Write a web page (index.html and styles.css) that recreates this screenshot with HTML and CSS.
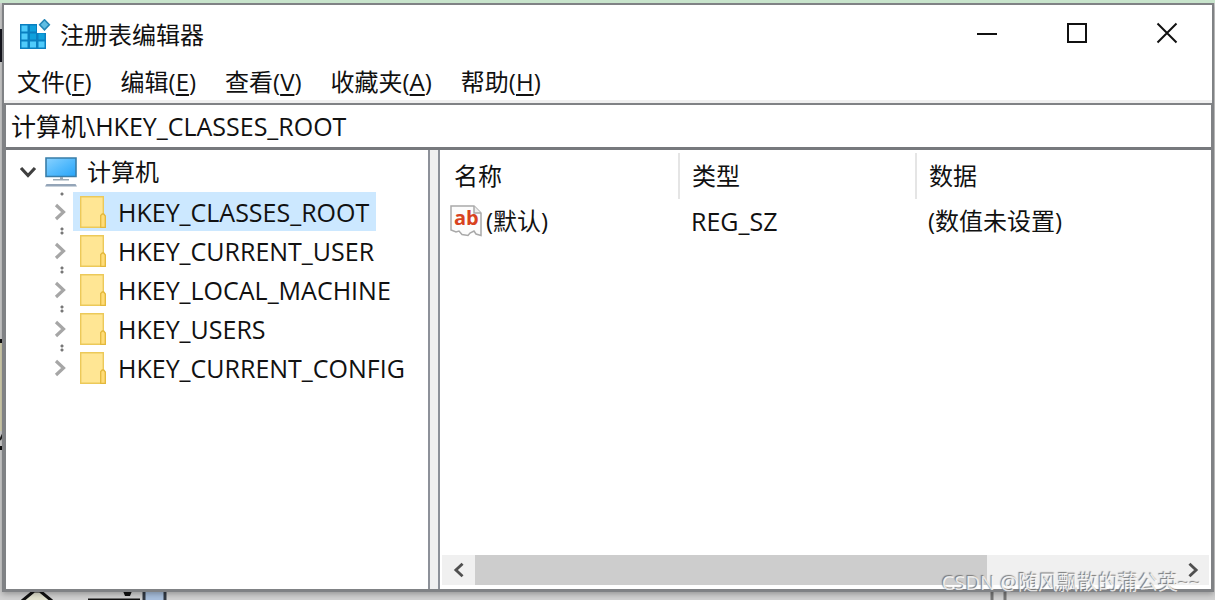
FILE: index.html
```
<!DOCTYPE html>
<html lang="zh-CN">
<head>
  <meta charset="UTF-8">
  <title>注册表编辑器</title>
  <link rel="stylesheet" href="styles.css">
</head>
<body>
  <svg class="symbols" width="0" height="0" aria-hidden="true">
    <symbol id="chevron" viewBox="0 0 12 18">
      <path d="M2 2l7.500 7-7.500 7" fill="none" stroke="currentColor" stroke-width="3.200"/>
    </symbol>
    <symbol id="folder" viewBox="0 0 26 32">
      <path d="M.7.7h22.600v17.500l2 2.500v10.600H.7z" fill="#ffe694" stroke="#ecc95a" stroke-width="1.400"/>
      <path d="M20.700 31.300V19.500l1.500-1.500h1.500l1.600 2v11.300z" fill="#ffdc78" stroke="#e3b83c" stroke-width="1.300"/>
    </symbol>
  </svg>

  <!-- 桌面背景 -->
  <svg class="desk desk-left" width="4" height="590" aria-hidden="true">
    <path d="M0 26h3v33H0z" fill="#15151f"/>
    <path d="M0 336h4v4H0zM0 443h4v4H0z" fill="#111"/>
    <path d="M0 437l4-8" stroke="#222" stroke-width="2"/>
    <path d="M0 340h3v88H0z" fill="#d9d5b4"/>
  </svg>
  <svg class="desk desk-bottom" width="200" height="9" aria-hidden="true">
    <path d="M22 10L34 0h6l12 10" fill="#e4e4d0" stroke="#111" stroke-width="3"/>
    <path d="M88 8.500h52" stroke="#111" stroke-width="2"/>
    <path d="M123 0h9l-2 5h-5z" fill="#111"/>
    <path d="M145 0h20v9h-20z" fill="#a9c0de"/>
    <path d="M144 0v9M165 0v9" stroke="#333a44" stroke-width="3"/>
  </svg>
  <svg class="desk desk-right" width="20" height="9" aria-hidden="true">
    <path d="M2 0v9M15 0v9" stroke="#777" stroke-width="3"/>
  </svg>

  <div class="window">
    <div class="titlebar">
      <svg class="app-icon" viewBox="0 0 32 32" aria-hidden="true">
        <path d="M1 5h17v9h9v16H1z" fill="#0a7fc0"/>
        <path d="M2.500 6.500h6v6h-6zM2.500 14.500h6v6h-6zM2.500 22.500h6v6h-6zM11 22.500h6v6h-6zM19.500 22.500h6v6h-6z" fill="#4fcbfb"/>
        <path d="M11 6.500h6v6h-6zM11 14.500h6v6h-6zM19.500 14.500h6v6h-6z" fill="#0fa0dc"/>
        <path d="M25.500.8l4.800 5-4.800 5-4.800-5z" fill="#5fbde3" stroke="#2385b5" stroke-width="1.600"/>
      </svg>
      <h1>注册表编辑器</h1>
      <div class="win-btns">
        <button aria-label="最小化"><svg viewBox="0 0 22 22"><path d="M1 12h20"/></svg></button>
        <button aria-label="最大化"><svg viewBox="0 0 22 22"><path d="M2 2h18v18H2z"/></svg></button>
        <button aria-label="关闭"><svg viewBox="0 0 22 22"><path d="M1.500 1.500l19 19M20.500 1.500l-19 19"/></svg></button>
      </div>
    </div>

    <div class="menubar">
      <button>文件(<u>F</u>)</button>
      <button>编辑(<u>E</u>)</button>
      <button>查看(<u>V</u>)</button>
      <button>收藏夹(<u>A</u>)</button>
      <button>帮助(<u>H</u>)</button>
    </div>

    <div class="client">
      <input class="address" type="text" aria-label="地址" value="计算机\HKEY_CLASSES_ROOT">

      <div class="panes">
        <div class="tree">
          <div class="root">
            <button class="arrow open" aria-label="折叠"><svg><use href="#chevron"/></svg></button>
            <svg class="pc" viewBox="0 0 32 30" aria-hidden="true">
              <defs>
                <linearGradient id="screen" x1="0" y1="0" x2="1" y2="1">
                  <stop offset="0" stop-color="#8ad2ff"/>
                  <stop offset=".5" stop-color="#55bbfd"/>
                  <stop offset="1" stop-color="#27a4f8"/>
                </linearGradient>
              </defs>
              <path d="M1 1h30v18.500H1z" fill="url(#screen)" stroke="#397da8" stroke-width="1.600"/>
              <path d="M15 20h3v2h6v1.500H8V22h7z" fill="#9aa9b5"/>
              <path d="M1.500 27h29l1.500 2.500H0z" fill="#94a5b8"/>
            </svg>
            <span>计算机</span>
          </div>
          <ul>
            <li>
              <button class="arrow" aria-label="展开"><svg><use href="#chevron"/></svg></button>
              <span class="key selected"><svg><use href="#folder"/></svg>HKEY_CLASSES_ROOT</span>
            </li>
            <li>
              <button class="arrow" aria-label="展开"><svg><use href="#chevron"/></svg></button>
              <span class="key"><svg><use href="#folder"/></svg>HKEY_CURRENT_USER</span>
            </li>
            <li>
              <button class="arrow" aria-label="展开"><svg><use href="#chevron"/></svg></button>
              <span class="key"><svg><use href="#folder"/></svg>HKEY_LOCAL_MACHINE</span>
            </li>
            <li>
              <button class="arrow" aria-label="展开"><svg><use href="#chevron"/></svg></button>
              <span class="key"><svg><use href="#folder"/></svg>HKEY_USERS</span>
            </li>
            <li>
              <button class="arrow" aria-label="展开"><svg><use href="#chevron"/></svg></button>
              <span class="key"><svg><use href="#folder"/></svg>HKEY_CURRENT_CONFIG</span>
            </li>
          </ul>
        </div>

        <div class="list">
          <table>
            <thead>
              <tr><th>名称</th><th>类型</th><th>数据</th></tr>
            </thead>
            <tbody>
              <tr>
                <td>
                  <div class="name">
                    <svg viewBox="0 0 32 32" aria-hidden="true">
                      <path d="M1 1h23l7 7v22.500l-5-1.500-2-3-4 2-2 2.500-6-1-3-3.500-3 1-5-2z" fill="#fcfcfc" stroke="#a9a9a9" stroke-width="1.500"/>
                      <path d="M24 1v7h7" fill="#eee" stroke="#a9a9a9" stroke-width="1.500"/>
                      <text x="4" y="20">ab</text>
                    </svg>
                    (默认)
                  </div>
                </td>
                <td class="type">REG_SZ</td>
                <td>(数值未设置)</td>
              </tr>
            </tbody>
          </table>
          <div class="scrollbar">
            <button class="left" aria-label="向左滚动"><svg><use href="#chevron"/></svg></button>
            <div class="track"><div class="thumb"></div></div>
            <button aria-label="向右滚动"><svg><use href="#chevron"/></svg></button>
          </div>
        </div>
      </div>
    </div>
  </div>

  <div class="watermark">CSDN @随风飘散的蒲公英~~</div>
</body>
</html>
```
FILE: styles.css
```
* {
  box-sizing: border-box;
}

body {
  margin: 0;
  height: 100vh;
  padding: 0 1px 8px 2px;
  display: flex;
  flex-direction: column;
  position: relative;
  overflow: hidden;
  background: #d2d2d2;
  border-top: 3px solid #c8e4cc;
  color: #111;
  font-family: "Open Sans", "Noto Sans CJK SC", sans-serif;
  font-size: 24px;
  line-height: 32px;
}

button {
  padding: 0;
  border: none;
  background: none;
  color: inherit;
  font: inherit;
}

svg {
  display: block;
  flex: none;
}

.symbols {
  position: absolute;
}

.desk {
  position: absolute;
}

.desk-left {
  left: 0;
  top: 0;
}

.desk-bottom {
  left: 0;
  bottom: 0;
}

.desk-right {
  right: 205px;
  bottom: 0;
}

.window {
  flex: 1;
  min-height: 0;
  display: flex;
  flex-direction: column;
  position: relative;
  background: #fff;
  border: 2px solid #808285;
  box-shadow: 0 2px 6px rgba(0, 0, 0, 0.3);
}

.titlebar {
  display: flex;
  align-items: center;
  height: 59px;
  padding-left: 15px;
}

.app-icon {
  width: 32px;
  height: 32px;
}

.titlebar h1 {
  margin: 0 0 0 9px;
  font-size: 24px;
  font-weight: normal;
}

.win-btns {
  display: flex;
  align-self: flex-start;
  margin-left: auto;
}

.win-btns button {
  width: 90px;
  height: 56px;
  display: flex;
  align-items: center;
  justify-content: center;
}

.win-btns svg {
  width: 22px;
  height: 22px;
  fill: none;
  stroke: #111;
  stroke-width: 2;
}

.menubar {
  display: flex;
  gap: 29px;
  height: 39px;
  padding-left: 13px;
  border-bottom: 3px solid #f0f0f0;
}

.menubar u {
  text-decoration-thickness: 2px;
  text-underline-offset: 3px;
}

.client {
  flex: 1;
  min-height: 0;
  display: flex;
  flex-direction: column;
  border: solid #808285;
  border-width: 2px 1px 1px 2px;
}

.address {
  height: 42px;
  padding: 0 5px 3px;
  border: none;
  outline: none;
  background: #fff;
  color: inherit;
  font: inherit;
  font-size: 25px;
}

.panes {
  flex: 1;
  min-height: 0;
  display: flex;
  gap: 8px;
  background: #f0f0f0;
  border-top: 3px solid #77797d;
}

.tree {
  flex: none;
  width: 424px;
  padding: 2px 0 0 13px;
  background: #fff;
  border-right: 2px solid #8d9199;
}

.root {
  display: flex;
  align-items: center;
  height: 40px;
}

.pc {
  width: 32px;
  height: 30px;
  margin: 0 10px 0 8px;
}

.arrow {
  width: 18px;
  height: 18px;
  display: flex;
  align-items: center;
  justify-content: center;
  color: #a6a6a6;
}

.arrow svg {
  width: 12px;
  height: 18px;
}

.arrow.open {
  color: #404040;
  transform: rotate(90deg);
}

.tree ul {
  margin: 0;
  padding: 0 0 0 32px;
  list-style: none;
}

.tree li {
  display: flex;
  align-items: center;
  height: 39px;
  /* 连接线的小点 */
  background: radial-gradient(circle, #777 1px, transparent 2px) 9px 0 / 4px 4px no-repeat,
    radial-gradient(circle, #777 1px, transparent 2px) 9px 35px / 4px 4px no-repeat;
}

.tree li:last-child {
  background-size: 4px 4px, 0 0;
}

.key {
  display: flex;
  align-items: center;
  gap: 12px;
  height: 39px;
  margin-left: 4px;
  padding: 0 7px;
  font-size: 25px;
}

.key svg {
  width: 26px;
  height: 32px;
}

.selected {
  background: #cce8ff;
}

.list {
  flex: 1;
  min-width: 0;
  display: flex;
  flex-direction: column;
  justify-content: space-between;
  padding: 3px 2px 4px;
  background: #fff;
  border-left: 2px solid #8d9199;
}

table {
  width: 100%;
  table-layout: fixed;
  border-collapse: collapse;
}

th,
td {
  padding: 0 0 0 12px;
  text-align: left;
  font-weight: normal;
}

th {
  width: 237px;
  height: 46px;
  border-right: 2px solid #e5e5e5;
}

th:last-child {
  width: auto;
  border-right: none;
}

td {
  height: 44px;
}

td:first-child {
  padding-left: 8px;
}

.type {
  font-size: 25px;
}

.name {
  display: flex;
  align-items: center;
  gap: 4px;
}

.name svg {
  width: 32px;
  height: 32px;
  overflow: visible;
}

.name text {
  fill: #d8431f;
  font-family: "Open Sans", sans-serif;
  font-size: 20px;
  font-weight: bold;
}

.scrollbar {
  display: flex;
  height: 30px;
  background: #f0f0f0;
}

.scrollbar button {
  width: 33px;
  display: flex;
  align-items: center;
  justify-content: center;
  color: #505050;
}

.scrollbar svg {
  width: 12px;
  height: 16px;
}

.left svg {
  transform: scaleX(-1);
}

.track {
  flex: 1;
}

.thumb {
  width: 73%;
  height: 100%;
  background: #cdcdcd;
}

.watermark {
  position: absolute;
  right: 14px;
  bottom: 3px;
  color: rgba(255, 255, 255, 0.8);
  font-size: 20px;
  line-height: 28px;
  text-shadow: -1px -1px 1px #777;
}
```
